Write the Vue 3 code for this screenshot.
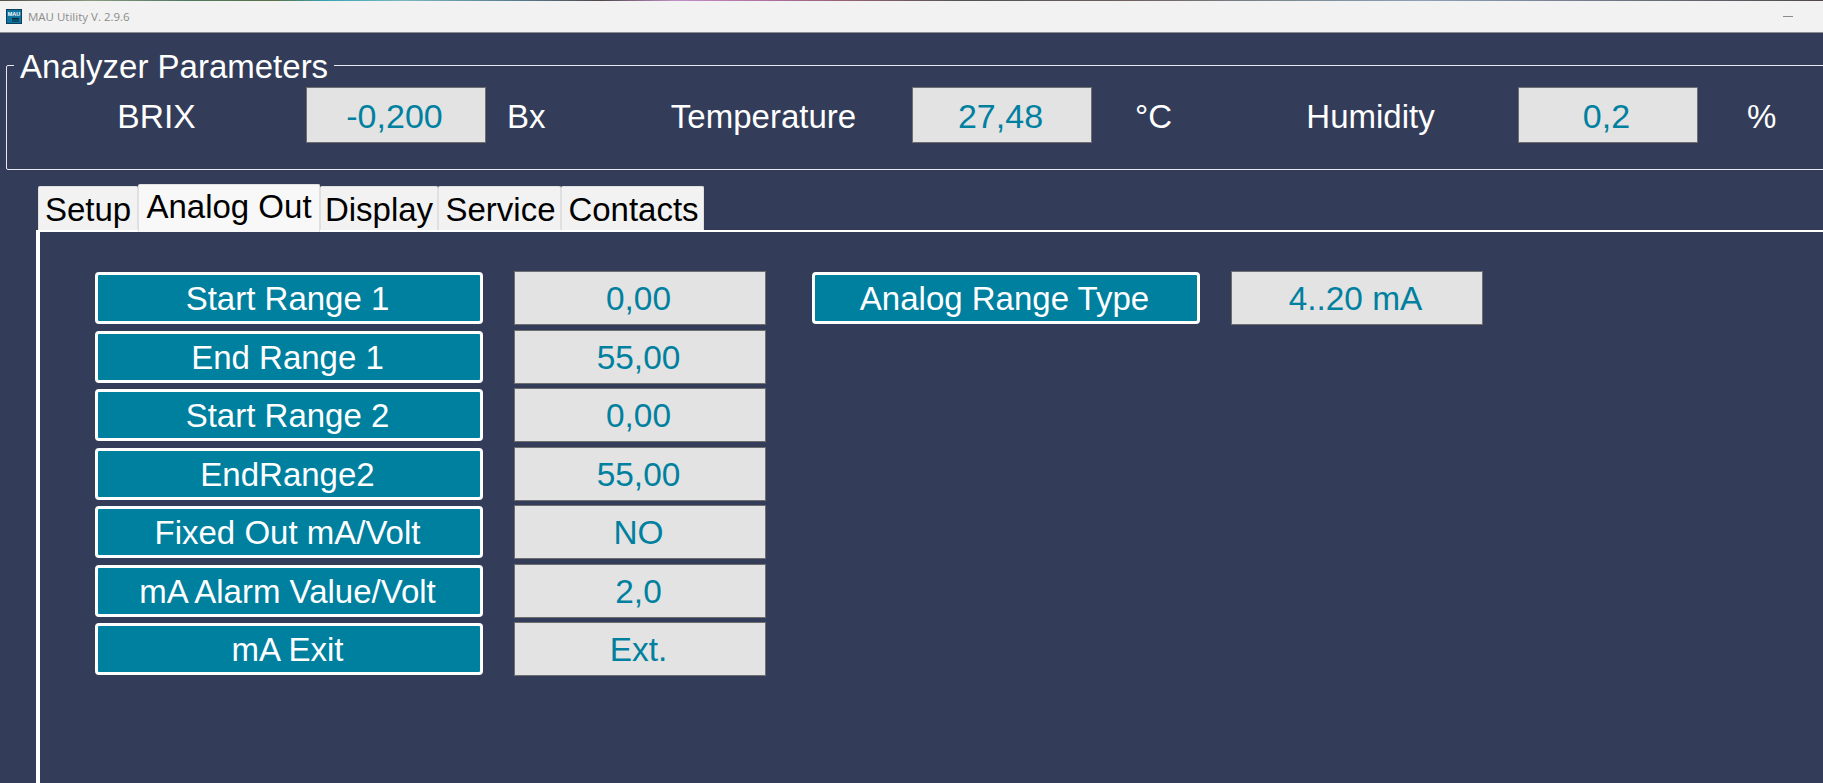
<script setup>
const readings = [
  { label: 'BRIX', value: '-0,200', unit: 'Bx', cls: 'brix' },
  { label: 'Temperature', value: '27,48', unit: '°C', cls: 'temp' },
  { label: 'Humidity', value: '0,2', unit: '%', cls: 'hum' }
]
const tabs = [
  { name: 'Setup', w: 100, nudge: 0 },
  { name: 'Analog Out', w: 182, nudge: 0, active: true },
  { name: 'Display', w: 118, nudge: 0 },
  { name: 'Service', w: 123, nudge: 2 },
  { name: 'Contacts', w: 143, nudge: 2 }
]
const rows = [
  ['Start Range 1', '0,00'],
  ['End Range 1', '55,00'],
  ['Start Range 2', '0,00'],
  ['EndRange2', '55,00'],
  ['Fixed Out mA/Volt', 'NO'],
  ['mA Alarm Value/Volt', '2,0'],
  ['mA Exit', 'Ext.']
]
</script>

<template>
  <div class="window">
    <header class="titlebar">
      <svg class="appicon" width="16" height="15" viewBox="0 0 16 15">
        <rect x="0.5" y="0.5" width="15" height="14" fill="#0e74a0" stroke="#0b3f5c" />
        <text x="8" y="7" text-anchor="middle" class="icontext">MAU</text>
        <rect x="6" y="9" width="7" height="1.5" fill="#0c2432" />
        <rect x="6" y="11.5" width="7" height="1" fill="#0c2432" />
      </svg>
      <span class="apptitle">MAU Utility V. 2.9.6</span>
      <span class="minimize"></span>
    </header>

    <section class="group">
      <h2 class="legend">Analyzer Parameters</h2>
      <div class="readings">
        <div v-for="r in readings" :key="r.label" class="reading" :class="r.cls">
          <span class="rlabel">{{ r.label }}</span>
          <span class="box rbox">{{ r.value }}</span>
          <span class="runit">{{ r.unit }}</span>
        </div>
      </div>
    </section>

    <nav class="tabs">
      <div
        v-for="t in tabs"
        :key="t.name"
        class="tab"
        :class="{ active: t.active }"
        :style="{ width: t.w + 'px', paddingLeft: t.nudge + 'px' }"
      >{{ t.name }}</div>
    </nav>

    <main class="panel">
      <div class="col">
        <div v-for="row in rows" :key="row[0]" class="row">
          <div class="btn">{{ row[0] }}</div>
          <div class="box val">{{ row[1] }}</div>
        </div>
      </div>
      <div class="col">
        <div class="row">
          <div class="btn">Analog Range Type</div>
          <div class="box val">4..20 mA</div>
        </div>
      </div>
    </main>
  </div>
</template>

<style>
html, body { margin: 0; background: #333d59; overflow: hidden; }
</style>

<style scoped>
.window {
  width: 1823px;
  height: 783px;
  overflow: hidden;
  background: #333d59;
  font-family: "Liberation Sans", Arial, sans-serif;
  font-size: 33px;
  color: #fff;
}
.titlebar {
  height: 33px;
  box-sizing: border-box;
  background: #f2f2f2;
  border-bottom: 1px solid #8e8e8e;
  display: flex;
  align-items: center;
  padding-left: 6px;
  position: relative;
}
.titlebar::before {
  content: "";
  position: absolute;
  left: 0;
  right: 0;
  top: 0;
  height: 1px;
  background: linear-gradient(90deg, #55504a 0%, #8a9a80 5%, #4f7a60 10%, #5a7048 15%, #37a5b5 18%, #7ab8c0 22%, #5a7f95 28%, #50484a 33%, #c08fc8 37%, #b070a0 42%, #906070 47%, #50544f 53%, #706060 62%, #7a8890 70%, #8fa0b5 78%, #707a88 88%, #50484a 100%);
}
.appicon { flex: none; }
.icontext {
  font-family: "Liberation Sans", sans-serif;
  font-size: 5.5px;
  font-weight: 700;
  fill: #fff;
}
.apptitle {
  margin-left: 6px;
  font-family: "Open Sans", "Liberation Sans", sans-serif;
  font-size: 11.5px;
  color: #8c8c8c;
}
.minimize {
  margin-left: auto;
  margin-right: 30px;
  width: 10px;
  height: 1px;
  background: #8c8c8c;
}
.group {
  position: relative;
  margin: 32px 0 0 6px;
  width: 1900px;
  height: 105px;
  box-sizing: border-box;
  border: 1px solid #e8e8ee;
  border-radius: 2px;
}
.legend {
  position: absolute;
  left: 7px;
  top: -17px;
  margin: 0;
  padding: 0 6px;
  background: #333d59;
  font: inherit;
  line-height: 36px;
}
.readings {
  display: flex;
  padding-top: 21px;
}
.reading {
  display: flex;
  align-items: center;
  flex: none;
}
.brix { width: 605px; }
.temp { width: 606px; }
.rlabel { flex: none; box-sizing: border-box; text-align: center; padding-top: 3px; }
.brix .rlabel { width: 299px; font-size: 33.6px; }
.temp .rlabel { width: 300px; padding-left: 3px; }
.hum .rlabel { width: 300px; padding-left: 5px; }
.box {
  box-sizing: border-box;
  background: #e3e3e3;
  border: 1px solid #6e6e6e;
  color: #00809f;
  display: flex;
  align-items: center;
  justify-content: center;
  flex: none;
}
.rbox { width: 180px; height: 56px; padding: 3px 3px 0 0; font-size: 34px; }
.runit { margin-left: 21px; padding-top: 3px; }
.temp .runit { margin-left: 43px; }
.hum .runit { margin-left: 49px; }
.tabs {
  display: flex;
  align-items: flex-end;
  margin: 14px 0 0 38px;
  height: 47px;
  position: relative;
  z-index: 1;
}
.tab {
  box-sizing: border-box;
  height: 44px;
  background: #f2f2f2;
  border: 1px solid #e0e0e0;
  border-bottom: none;
  border-radius: 2px 2px 0 0;
  color: #000;
  text-align: center;
  line-height: 46px;
  white-space: nowrap;
  margin-bottom: 1px;
}
.tab.active {
  height: 48px;
  background: #f8f8f8;
  line-height: 43px;
  margin-bottom: -1px;
}
.panel {
  margin-left: 36px;
  margin-top: -1px;
  height: 600px;
  border-left: 4px solid #fff;
  border-top: 2px solid #fff;
  padding: 39px 0 0 55px;
  display: flex;
  gap: 46px;
}
.col {
  display: flex;
  flex-direction: column;
  gap: 4.5px;
}
.row {
  display: flex;
  align-items: center;
  gap: 31px;
}
.btn {
  box-sizing: border-box;
  width: 388px;
  height: 52px;
  padding: 2px 3px 0 0;
  background: #00809f;
  border: 3px solid #fff;
  border-radius: 4px;
  display: flex;
  align-items: center;
  justify-content: center;
  white-space: nowrap;
}
.val {
  width: 252px;
  height: 54px;
  padding: 2px 3px 0 0;
  font-size: 33.4px;
}
</style>
